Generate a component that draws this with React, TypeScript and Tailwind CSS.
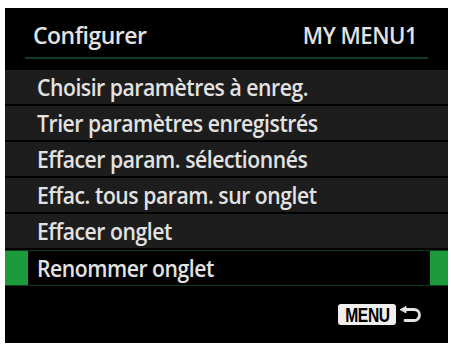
import React from 'react';

const items = [
  'Choisir paramètres à enreg.',
  'Trier paramètres enregistrés',
  'Effacer param. sélectionnés',
  'Effac. tous param. sur onglet',
  'Effacer onglet',
  'Renommer onglet',
];

const font = { fontFamily: '"Open Sans", "Liberation Sans", sans-serif' };

const App: React.FC = () => {
  const selected = 5;
  return (
    <div className="w-[451px] h-[345px] bg-white pl-[5px] pr-[3px] pt-[8px] pb-[2px]">
      <div className="w-full h-full bg-black flex flex-col text-[#e2e2e2] font-semibold" style={font}>
        <div className="h-[62px] flex flex-col px-[20px] pt-[12px]">
          <div className="flex justify-between items-center px-[8px] pr-[11px] text-[23px] leading-[30px] tracking-[-0.5px]">
            <span className="scale-x-[1.0] origin-left inline-block">Configurer</span>
            <span className="scale-x-[0.96] origin-right inline-block">MY MENU1</span>
          </div>
          <div className="mt-[7px] h-[2px] bg-[#0e3b29]" />
        </div>
        <div className="flex flex-col">
          {items.map((t, i) =>
            i === selected ? (
              <div key={t} className="h-[36px] flex bg-[#0c3a22] py-[1px]">
                <div className="w-[23px] bg-[#1c9a3c]" />
                <div className="flex-1 bg-black flex items-center pl-[9px] text-[23px] tracking-[-0.5px]">
                  <span className="scale-x-[0.92] origin-left inline-block whitespace-nowrap">{t}</span>
                </div>
                <div className="w-[18px] bg-[#1c9a3c]" />
              </div>
            ) : (
              <div key={t} className="h-[36px] bg-[#1d1d1d] border-b-[2px] border-black flex items-center pl-[32px] text-[23px] tracking-[-0.5px]">
                <span className="scale-x-[0.92] origin-left inline-block whitespace-nowrap">{t}</span>
              </div>
            )
          )}
        </div>
        <div className="flex-1 flex items-center justify-end pr-[25px] gap-[3px]">
          <span className="bg-[#efefef] text-black rounded-[3px] w-[58px] h-[21px] flex items-center justify-center text-[20px] font-bold tracking-[-0.5px] leading-none" style={{ fontFamily: '"Liberation Sans", sans-serif' }}>
            <span className="scale-x-[0.78] inline-block">MENU</span>
          </span>
          <svg width="24" height="17" viewBox="0 0 24 17" fill="none" stroke="#e4e4e4" strokeWidth="2.8" strokeLinecap="round">
            <path d="M6 3.5 H15 a5.5 5.5 0 0 1 0 11 H6" />
            <path d="M1.5 3.5 L7 0.5 V6.5 Z" fill="#e4e4e4" strokeWidth="1" />
          </svg>
        </div>
      </div>
    </div>
  );
};

export default App;
